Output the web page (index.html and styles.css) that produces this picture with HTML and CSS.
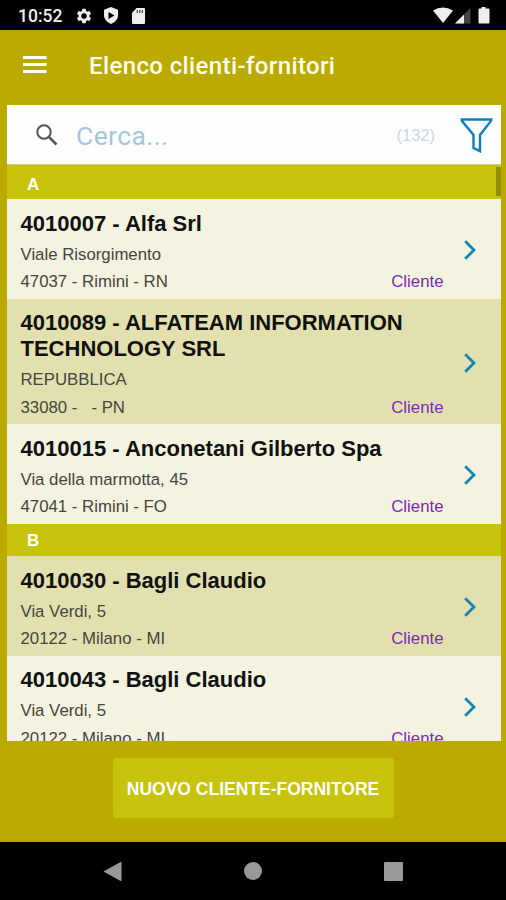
FILE: index.html
```html
<!DOCTYPE html>
<html lang="it">
<head>
  <meta charset="UTF-8">
  <title>Elenco clienti-fornitori</title>
  <link rel="stylesheet" href="styles.css">
</head>
<body>
  <div class="status-bar">
    <span class="clock">10:52</span>
    <svg width="18" height="18" viewBox="0 0 24 24"><path fill="#eee" d="M19.14 12.94a7 7 0 0 0 0-1.88l2.03-1.58a.5.5 0 0 0 .12-.61l-1.92-3.32a.5.5 0 0 0-.59-.22l-2.39.96a7 7 0 0 0-1.62-.94l-.36-2.54a.5.5 0 0 0-.48-.41h-3.84a.5.5 0 0 0-.47.41l-.36 2.54c-.59.24-1.13.57-1.62.94l-2.39-.96a.5.5 0 0 0-.59.22L2.74 8.87a.5.5 0 0 0 .12.61l2.03 1.58a7 7 0 0 0 0 1.88l-2.03 1.58a.5.5 0 0 0-.12.61l1.92 3.32c.12.22.37.29.59.22l2.39-.96c.5.38 1.03.7 1.62.94l.36 2.54c.05.24.24.41.48.41h3.84c.24 0 .44-.17.47-.41l.36-2.54a7 7 0 0 0 1.62-.94l2.39.96c.22.08.47 0 .59-.22l1.92-3.32a.5.5 0 0 0-.12-.61zM12 15.6a3.6 3.6 0 1 1 0-7.2 3.6 3.6 0 0 1 0 7.2z"/></svg>
    <svg class="shield" width="14" height="17" viewBox="0 0 14 17"><path fill="#eee" d="M7 0l7 2.700v5.600c0 4-3 7.200-7 8.700-4-1.500-7-4.700-7-8.700V2.700z"/><path fill="#000" d="M4.500 5v7l6-3.500z"/></svg>
    <svg class="sd" width="13" height="16" viewBox="0 0 13 16"><path fill="#eee" d="M4.500 0H12a1 1 0 0 1 1 1v14a1 1 0 0 1-1 1H1a1 1 0 0 1-1-1V5z"/><path stroke="#444" stroke-width="1.200" d="M5.300 2v3M7.800 2v3M10.300 2v3"/></svg>
    <svg class="signals" width="57" height="17" viewBox="0 0 57 17">
      <path fill="#eee" d="M0 3.500Q10 -2.500 20 3.500L10 16z"/>
      <path fill="#444" d="M37.500 1v15.500H22z"/>
      <path fill="#eee" d="M31 7.500v9h-9z"/>
      <path fill="#eee" d="M48.500 0h4v1.500h3a1 1 0 0 1 1 1V15.500a1 1 0 0 1-1 1h-9a1 1 0 0 1-1-1v-13a1 1 0 0 1 1-1h2z"/>
    </svg>
  </div>

  <header>
    <svg width="24" height="18" viewBox="0 0 24 18"><path stroke="#fff" stroke-width="3" d="M0 1.500h23.500M0 8.500h23.500M0 15.500h23.500"/></svg>
    <h1>Elenco clienti-fornitori</h1>
  </header>

  <div class="panel">
    <div class="search">
      <svg width="22" height="22" viewBox="0 0 22 22"><circle cx="8" cy="8" r="6.700" fill="none" stroke="#555" stroke-width="2"/><path stroke="#555" stroke-width="2.600" d="M12.800 12.800l7.700 7.700"/></svg>
      <span class="placeholder">Cerca...</span>
      <span class="count">(132)</span>
      <svg width="33" height="36" viewBox="0 0 33 36"><path fill="none" stroke="#117fbd" stroke-width="2.400" d="M1.800 2.500h29.400v1.200L20 18v16.200L13.500 31V18L1.800 3.700z"/></svg>
    </div>

    <div class="list">
      <div class="letter first">A<span class="scrollbar"></span></div>

      <div class="row">
        <h2>4010007 - Alfa Srl</h2>
        <p>Viale Risorgimento</p>
        <p>47037 - Rimini - RN<span class="type">Cliente</span></p>
        <svg class="arrow" width="12" height="20" viewBox="0 0 12 20"><path d="M1.200 1.200L10 10l-8.800 8.800"/></svg>
      </div>
      <div class="row dark">
        <h2>4010089 - ALFATEAM INFORMATION TECHNOLOGY SRL</h2>
        <p>REPUBBLICA</p>
        <p>33080 - &nbsp; - PN<span class="type">Cliente</span></p>
        <svg class="arrow" width="12" height="20" viewBox="0 0 12 20"><path d="M1.200 1.200L10 10l-8.800 8.800"/></svg>
      </div>
      <div class="row">
        <h2>4010015 - Anconetani Gilberto Spa</h2>
        <p>Via della marmotta, 45</p>
        <p>47041 - Rimini - FO<span class="type">Cliente</span></p>
        <svg class="arrow" width="12" height="20" viewBox="0 0 12 20"><path d="M1.200 1.200L10 10l-8.800 8.800"/></svg>
      </div>

      <div class="letter">B</div>

      <div class="row dark">
        <h2>4010030 - Bagli Claudio</h2>
        <p>Via Verdi, 5</p>
        <p>20122 - Milano - MI<span class="type">Cliente</span></p>
        <svg class="arrow" width="12" height="20" viewBox="0 0 12 20"><path d="M1.200 1.200L10 10l-8.800 8.800"/></svg>
      </div>
      <div class="row">
        <h2>4010043 - Bagli Claudio</h2>
        <p>Via Verdi, 5</p>
        <p>20122 - Milano - MI<span class="type">Cliente</span></p>
        <svg class="arrow" width="12" height="20" viewBox="0 0 12 20"><path d="M1.200 1.200L10 10l-8.800 8.800"/></svg>
      </div>
    </div>
  </div>

  <div class="actions">
    <button class="new-btn">NUOVO CLIENTE-FORNITORE</button>
  </div>

  <!-- Android navigation -->
  <nav>
    <svg width="19" height="21" viewBox="0 0 19 21"><path fill="#999" d="M18.500 .5v20L.5 10.500z"/></svg>
    <svg width="18" height="18" viewBox="0 0 18 18"><circle cx="9" cy="9" r="9" fill="#999"/></svg>
    <svg width="19" height="19" viewBox="0 0 19 19"><rect width="19" height="19" rx="1" fill="#999"/></svg>
  </nav>
</body>
</html>
```
FILE: styles.css
```css
:root {
  --gold: #bbaa00;
  --lime: #c6c30a;
  --row-light: #f4f3df;
  --row-dark: #e2e0af;
}

* {
  box-sizing: border-box;
}

body {
  margin: 0;
  height: 900px;
  overflow: hidden;
  display: flex;
  flex-direction: column;
  background: var(--gold);
  font-family: "Liberation Sans", Arial, sans-serif;
}

svg {
  display: block;
  flex: none;
}

.status-bar {
  height: 30px;
  background: #000;
  color: #eee;
  display: flex;
  align-items: center;
  padding: 1px 16px 0 18px;
}

.clock {
  width: 57px;
  font: 500 17.5px Roboto, sans-serif;
}

.shield {
  margin-left: 11px;
}

.sd {
  margin-left: 14px;
}

.signals {
  margin-left: auto;
}

header {
  height: 75px;
  display: flex;
  align-items: center;
  padding: 0 23px 5px;
}

h1 {
  margin: 2px 0 0 42px;
  color: #fffef0;
  font: 500 24px Roboto, sans-serif;
  letter-spacing: 0.38px;
}

.panel {
  height: 636px;
  margin: 0 5px 0 7px;
  display: flex;
  flex-direction: column;
}

.search {
  height: 60px;
  flex: none;
  background: #fefefe;
  border-bottom: 1px solid #d3cd7c;
  display: flex;
  align-items: center;
  padding: 0 8px 0 29px;
}

.placeholder {
  margin: 2px 0 0 18px;
  flex: 1;
  color: #a5c6de;
  font: 400 26.5px Roboto, sans-serif;
  letter-spacing: 0.4px;
}

.count {
  margin: 2px 25px 0 0;
  color: #c9d9e5;
  font-size: 16.5px;
}

.list {
  flex: 1;
  overflow: hidden;
}

.letter {
  height: 32px;
  background: var(--lime);
  color: #fff;
  font-size: 17px;
  font-weight: bold;
  line-height: 33px;
  padding-left: 20px;
}

.letter.first {
  height: 34px;
  line-height: 39px;
  display: flex;
}

.scrollbar {
  width: 5px;
  height: 29px;
  margin: 2px 0 0 auto;
  background: #918e08;
}

.row {
  position: relative;
  background: var(--row-light);
  padding: 11.5px 57.5px 3.2px 13.5px;
}

.row.dark {
  background: var(--row-dark);
}

h2 {
  margin: 0 0 4px;
  font-size: 22px;
  line-height: 26px;
  color: #111;
}

p {
  margin: 0;
  display: flex;
  font-size: 16.8px;
  line-height: 27.5px;
  color: #45453e;
}

.type {
  margin-left: auto;
  color: #7a2bb2;
}

.arrow {
  position: absolute;
  right: 25px;
  top: calc(50% - 9px);
  fill: none;
  stroke: #1585b8;
  stroke-width: 2.8;
}

.actions {
  flex: 1;
  display: flex;
  justify-content: center;
  padding-top: 17px;
}

.new-btn {
  width: 281px;
  height: 60px;
  padding: 2px 0 0;
  border: none;
  border-radius: 3px;
  background: var(--lime);
  color: #fff;
  font: bold 17.5px "Liberation Sans", Arial, sans-serif;
}

nav {
  height: 58px;
  background: #000;
  display: flex;
  align-items: center;
  justify-content: space-between;
  padding: 0 103px;
}
```
